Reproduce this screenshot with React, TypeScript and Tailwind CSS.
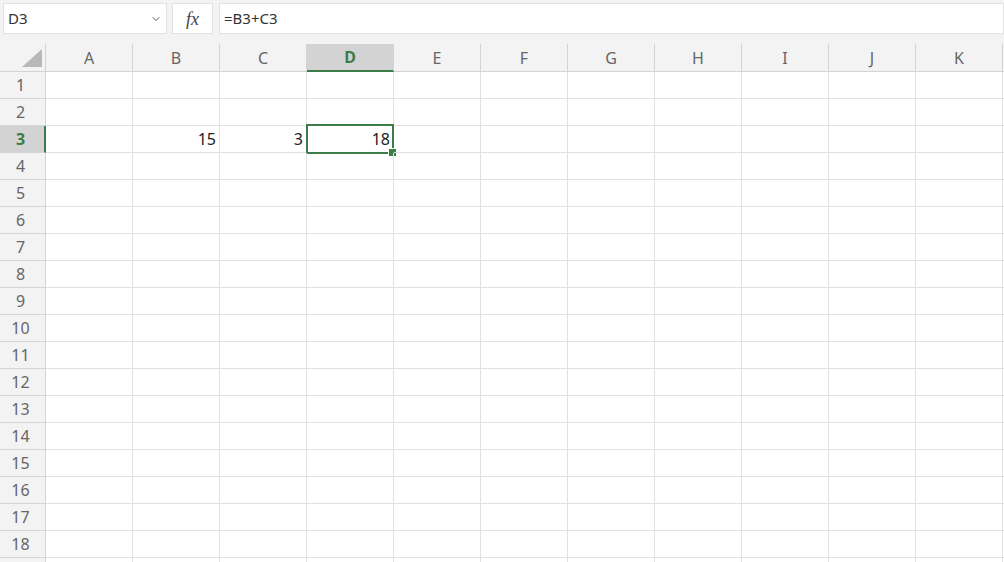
import { ChevronDown } from 'lucide-react';

const cols = ['A', 'B', 'C', 'D', 'E', 'F', 'G', 'H', 'I', 'J', 'K'];
// row 19 only peeks in under the bottom edge, so its number is left out
const rows = Array.from({ length: 19 }, (_, i) => i + 1);

const values: Record<string, string> = { B3: '15', C3: '3', D3: '18' };

export default function App() {
  return (
    <div className="w-[1004px] h-[562px] overflow-hidden bg-[#f3f3f3] font-['Noto_Sans','Open_Sans',sans-serif]">
      {/* Formula bar */}
      <div className="flex h-[44px] pt-[3px] gap-[5px]">
        <div className="ml-[3px] w-[164px] h-[31px] bg-white border border-[#e3e3e3] flex items-center justify-between pl-[4px] pr-[4px]">
          <span className="text-[15px] text-[#333]">D3</span>
          <ChevronDown size={12} strokeWidth={2} className="text-[#555]" />
        </div>
        <div className="w-[41px] h-[31px] bg-white border border-[#e3e3e3] flex items-center justify-center">
          <span className="font-['Liberation_Serif',serif] italic text-[18px] text-[#444] leading-none">fx</span>
        </div>
        <div className="flex-1 ml-[1px] h-[31px] bg-white border border-[#e3e3e3] flex items-center pl-[4px]">
          <span className="text-[15px] text-[#333]">=B3+C3</span>
        </div>
      </div>

      {/* Grid */}
      <div className="grid grid-cols-[46px_repeat(11,87px)_1fr] bg-white">
        {/* Header row */}
        <div className="h-[28px] bg-[#f3f3f3] border-r border-b border-[#d4d4d4] flex items-end justify-end pr-[3px] pb-[4px]">
          <svg width="20" height="18" viewBox="0 0 20 18">
            <polygon points="20,0 20,18 0,18" fill="#b8b8b8" />
          </svg>
        </div>
        {cols.map((c) =>
          c === 'D' ? (
            <div
              key={c}
              className="h-[28px] bg-[#d3d3d3] border-r border-[#d4d4d4] border-b-2 border-b-[#3b7d48] flex items-center justify-center text-[16px] font-bold text-[#3b7d48]"
            >
              {c}
            </div>
          ) : (
            <div
              key={c}
              className="h-[28px] bg-[#f3f3f3] border-r border-b border-[#d4d4d4] flex items-center justify-center text-[16px] text-[#666]"
            >
              {c}
            </div>
          )
        )}
        <div className="h-[28px] bg-[#f3f3f3] border-b border-[#d4d4d4]" />

        {/* Body rows */}
        {rows.map((r) => (
          <div key={r} className="contents">
            {r === 3 ? (
              <div className="h-[27px] bg-[#d3d3d3] border-b border-[#d4d4d4] border-r-2 border-r-[#3b7d48] flex items-center justify-center pr-[3px] text-[16px] font-bold text-[#3b7d48]">
                {r}
              </div>
            ) : (
              <div className="h-[27px] bg-[#f3f3f3] border-r border-b border-[#d4d4d4] flex items-center justify-center pr-[4px] text-[16px] text-[#666]">
                {r <= 18 ? r : null}
              </div>
            )}
            {cols.map((c) => {
              const id = `${c}${r}`;
              const v = values[id];
              return (
                <div
                  key={id}
                  className="relative h-[27px] border-r border-b border-[#e1e1e1] flex items-center justify-end pr-[3px] text-[16px] text-[#222]"
                >
                  {v}
                  {id === 'D3' && (
                    <>
                      <div className="absolute -left-[1px] -top-[2px] -right-[1px] -bottom-[2px] border-2 border-[#3b7d48] pointer-events-none" />
                      <div className="absolute -right-[4px] -bottom-[5px] w-[7px] h-[7px] bg-[#3b7d48] border border-white box-content" />
                    </>
                  )}
                </div>
              );
            })}
            <div className="h-[27px] border-b border-[#e1e1e1]" />
          </div>
        ))}
      </div>
    </div>
  );
}
